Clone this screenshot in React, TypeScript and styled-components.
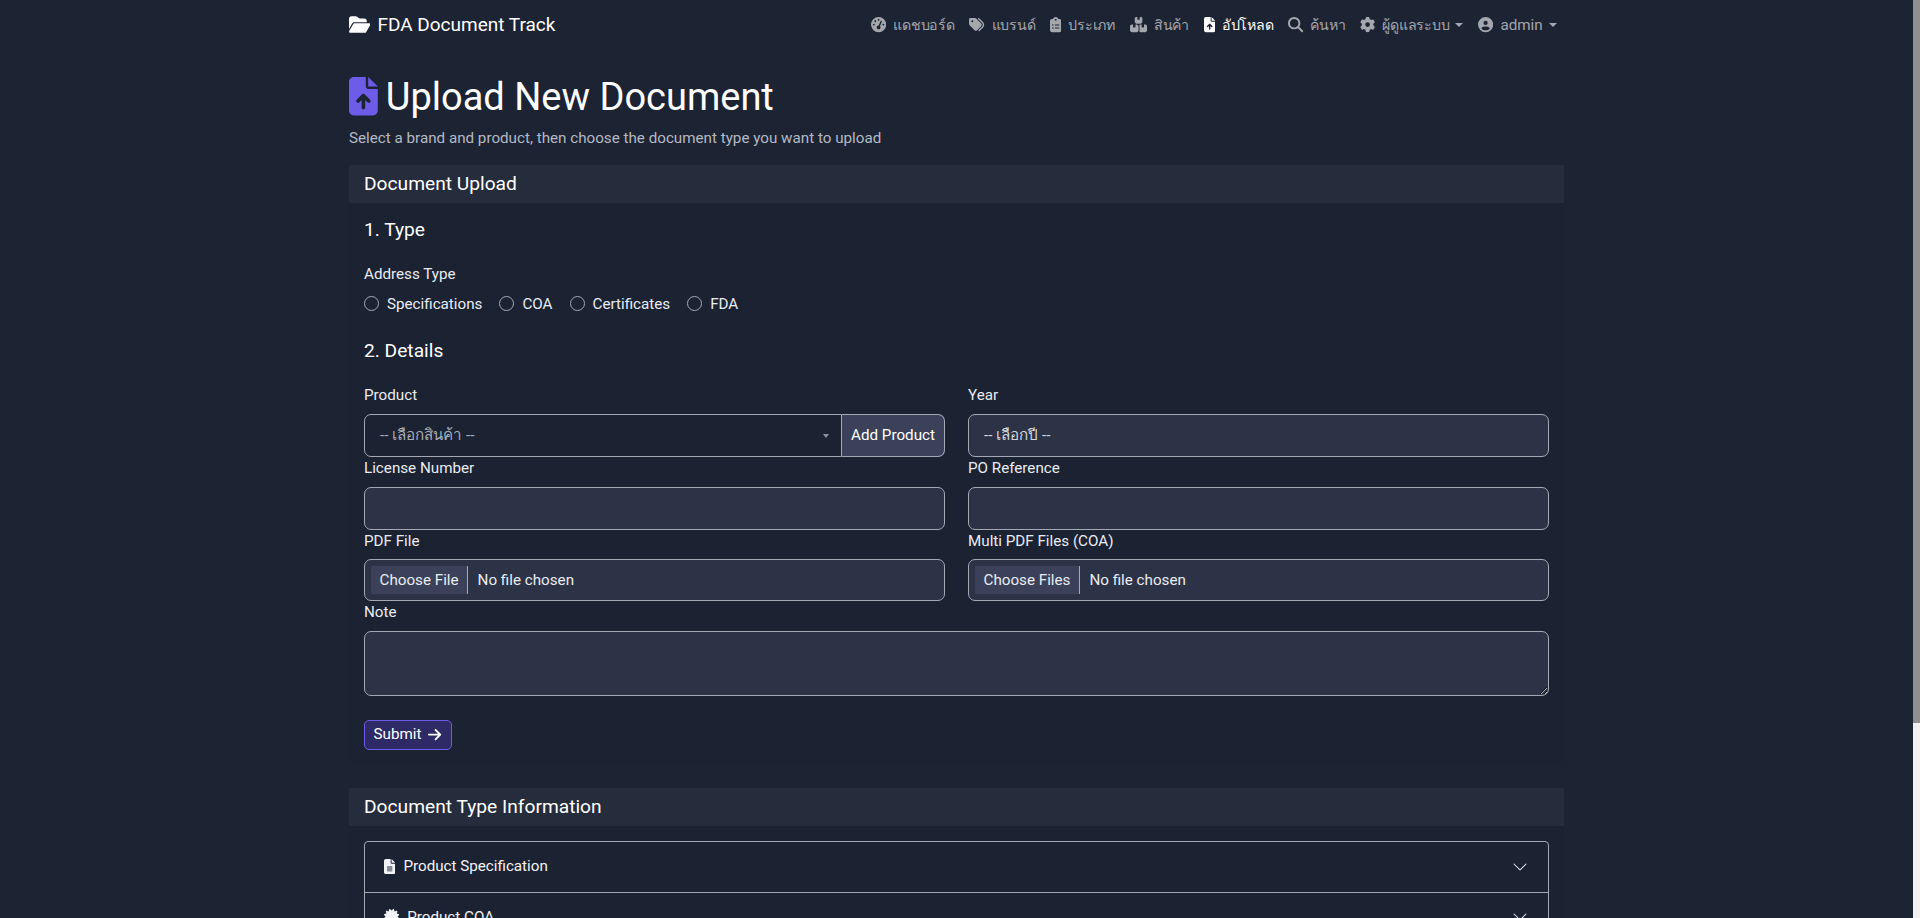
import React from 'react';
import styled, { createGlobalStyle } from 'styled-components';
import {
  FaFolderOpen,
  FaFileArrowUp,
  FaGaugeHigh,
  FaTags,
  FaClipboardList,
  FaBoxesStacked,
  FaMagnifyingGlass,
  FaGear,
  FaCircleUser,
  FaArrowRight,
  FaFileLines,
  FaCertificate,
  FaAward,
  FaShieldHalved
} from 'react-icons/fa6';

const FONT = `Roboto, 'Noto Sans', 'Noto Sans CJK SC', sans-serif`;

const GlobalStyle = createGlobalStyle`
  * { box-sizing: border-box; }
  body {
    margin: 0;
    padding-right: 7px;
    background: #1c2333;
    color: #e9ecf2;
    font-family: ${FONT};
    font-size: 15.2px;
    line-height: 22.8px;
  }
`;

const ScrollTrack = styled.div`
  position: fixed;
  top: 0;
  right: 0;
  bottom: 0;
  width: 7px;
  background: #f1f1f1;
`;

const ScrollThumb = styled.div`
  height: 723px;
  background: #8f8f8f;
`;

const Container = styled.div`
  width: 100%;
  max-width: 1239px;
  margin: 0 auto;
  padding: 0 12px;
`;

const Navbar = styled.nav`
  height: 50px;
  display: flex;
  align-items: center;
  justify-content: space-between;
`;

const Brand = styled.a`
  display: flex;
  align-items: center;
  gap: 7px;
  font-size: 19px;
  color: #fff;
  svg { width: 21.4px; height: 19px; }
`;

const NavList = styled.ul`
  display: flex;
  align-items: center;
  list-style: none;
  margin: 0;
  padding: 0;
`;

const NavItem = styled.li<{ $active?: boolean }>`
  display: flex;
  align-items: center;
  gap: 7px;
  padding: 0 7.4px;
  color: ${p => (p.$active ? '#fff' : 'rgba(255, 255, 255, 0.6)')};
`;

// FontAwesome glyphs differ in width, the icon box follows the glyph ratio
const GlyphBox = styled.span<{ $ratio: number }>`
  display: flex;
  width: ${p => p.$ratio * 15.2}px;
  height: 15.2px;
  svg { width: 100%; height: 100%; }
`;

const NavText = styled.span<{ $thai?: boolean }>`
  font-size: ${p => (p.$thai ? '14.2px' : '15.2px')};
  letter-spacing: ${p => (p.$thai ? '-0.25px' : '0')};
`;

const Caret = styled.span`
  display: inline-block;
  margin-left: -1px;
  border-top: 4.5px solid currentColor;
  border-left: 4.5px solid transparent;
  border-right: 4.5px solid transparent;
`;

const Title = styled.h1`
  display: flex;
  align-items: center;
  gap: 8px;
  margin: 23px 0 8px;
  padding-top: 1px;
  height: 46px;
  font-size: 38px;
  font-weight: 400;
  line-height: 46px;
  color: #fff;
  svg { width: 28.8px; height: 38.4px; color: #6c5ce7; }
`;

const Lead = styled.p`
  margin: 0 0 15px;
  color: #b4b9c4;
`;

const Card = styled.section`
  margin-bottom: 22.8px;
  border-radius: 6px;
  background: #1b2232;
`;

const CardHeader = styled.h5`
  margin: 0;
  height: 38px;
  padding: 1px 15px 0;
  display: flex;
  align-items: center;
  background: #252c3c;
  font-size: 19.2px;
  font-weight: 400;
  color: #fff;
`;

const CardBody = styled.div`
  padding: 15px;
`;

const SectionTitle = styled.h5`
  margin: 0 0 22px;
  font-size: 19.2px;
  font-weight: 400;
  line-height: 23px;
  color: #fff;
`;

const Label = styled.label`
  display: block;
  margin-bottom: 7px;
`;

const RadioRow = styled.div`
  display: flex;
  gap: 17px;
  margin-bottom: 24px;
`;

const RadioLabel = styled.label`
  display: flex;
  align-items: center;
  gap: 8px;
`;

const RadioDot = styled.span`
  width: 15px;
  height: 15px;
  border-radius: 50%;
  border: 1px solid #a5a9b3;
`;

const Grid = styled.div`
  display: grid;
  grid-template-columns: 1fr 1fr;
  column-gap: 23px;
`;

const Field = styled.div<{ $wide?: boolean }>`
  grid-column: ${p => (p.$wide ? '1 / -1' : 'auto')};
`;

const Control = styled.div`
  display: flex;
  align-items: center;
  height: 42.8px;
  padding: 0 15px;
  border: 1px solid #a5a9b3;
  border-radius: 7px;
  background: #2d3346;
  color: #d3d6dd;
`;

const InputGroup = styled.div`
  display: flex;
  height: 42.8px;
`;

const SelectBox = styled.div`
  flex: 1;
  display: flex;
  align-items: center;
  justify-content: space-between;
  padding: 0 12px 0 15px;
  border: 1px solid #a5a9b3;
  border-radius: 7px 0 0 7px;
  color: #a9adb8;
`;

const AddButton = styled.div`
  display: flex;
  align-items: center;
  width: 103px;
  justify-content: center;
  background: #3a4159;
  border: 1px solid #a5a9b3;
  border-left: 0;
  border-radius: 0 7px 7px 0;
  color: #fff;
`;

const SmallCaret = styled.span`
  border-top: 4px solid #8c909b;
  border-left: 3px solid transparent;
  border-right: 3px solid transparent;
`;

const FileControl = styled.div`
  display: flex;
  align-items: center;
  height: 41.6px;
  margin-top: 0.7px;
  padding: 0 6px;
  border: 1px solid #a5a9b3;
  border-radius: 7px;
  background: #2d3346;
`;

const FileButton = styled.span`
  display: flex;
  align-items: center;
  height: 28px;
  padding: 0 8.5px;
  margin-right: 9.5px;
  background: #3a4159;
  border-right: 1px solid #a5a9b3;
  color: #e9ecf2;
`;

const NoteArea = styled.textarea`
  display: block;
  width: 100%;
  height: 65px;
  border: 1px solid #a5a9b3;
  border-radius: 7px;
  background: #2d3346;
  outline: none;
`;

const SubmitButton = styled.button`
  display: inline-flex;
  align-items: center;
  gap: 6px;
  height: 30px;
  margin-top: 24px;
  padding: 0 8.5px;
  border: 1px solid #6c5ce7;
  border-radius: 5px;
  background: #2d2a66;
  color: #fff;
  font: inherit;
`;

const Accordion = styled.div`
  border: 1px solid #a5a9b3;
  border-radius: 4px;
`;

const AccordionRow = styled.div`
  display: flex;
  align-items: center;
  justify-content: space-between;
  height: 50px;
  padding: 0 20px 0 19px;
  & + & { border-top: 1px solid #a5a9b3; }
`;

const RowLabel = styled.span`
  display: flex;
  align-items: center;
  gap: 8px;
  color: #f2f3f6;
`;

const Chevron = () => (
  <svg width="16" height="16" viewBox="0 0 16 16" fill="#e9ecf2">
    <path d="M1.646 4.646a.5.5 0 0 1 .708 0L8 10.293l5.646-5.647a.5.5 0 0 1 .708.708l-6 6a.5.5 0 0 1-.708 0l-6-6a.5.5 0 0 1 0-.708z" />
  </svg>
);

const navLinks = [
  { label: 'แดชบอร์ด', icon: <FaGaugeHigh />, ratio: 1, thai: true },
  { label: 'แบรนด์', icon: <FaTags />, ratio: 1, thai: true },
  { label: 'ประเภท', icon: <FaClipboardList />, ratio: 0.75, thai: true },
  { label: 'สินค้า', icon: <FaBoxesStacked />, ratio: 1.125, thai: true },
  { label: 'อัปโหลด', icon: <FaFileArrowUp />, ratio: 0.75, thai: true, active: true },
  { label: 'ค้นหา', icon: <FaMagnifyingGlass />, ratio: 1, thai: true },
  { label: 'ผู้ดูแลระบบ', icon: <FaGear />, ratio: 1, thai: true, caret: true },
  { label: 'admin', icon: <FaCircleUser />, ratio: 1, caret: true }
];

const docTypes = [
  { label: 'Product Specification', icon: <FaFileLines />, ratio: 0.75 },
  { label: 'Product COA', icon: <FaCertificate />, ratio: 1 },
  { label: 'Certificates', icon: <FaAward />, ratio: 0.75 },
  { label: 'FDA', icon: <FaShieldHalved />, ratio: 1 }
];

export default function App() {
  return (
    <>
      <GlobalStyle />
      <ScrollTrack>
        <ScrollThumb />
      </ScrollTrack>
      <Container>
        <Navbar>
          <Brand>
            <FaFolderOpen />
            FDA Document Track
          </Brand>
          <NavList>
            {navLinks.map(link => (
              <NavItem key={link.label} $active={link.active}>
                <GlyphBox $ratio={link.ratio}>{link.icon}</GlyphBox>
                <NavText $thai={link.thai}>{link.label}</NavText>
                {link.caret && <Caret />}
              </NavItem>
            ))}
          </NavList>
        </Navbar>

        <Title>
          <FaFileArrowUp />
          Upload New Document
        </Title>
        <Lead>Select a brand and product, then choose the document type you want to upload</Lead>

        <Card>
          <CardHeader>Document Upload</CardHeader>
          <CardBody>
            <SectionTitle>1. Type</SectionTitle>
            <Label>Address Type</Label>
            <RadioRow>
              {['Specifications', 'COA', 'Certificates', 'FDA'].map(t => (
                <RadioLabel key={t}>
                  <RadioDot />
                  {t}
                </RadioLabel>
              ))}
            </RadioRow>
            <SectionTitle>2. Details</SectionTitle>
            <Grid>
              <Field>
                <Label>Product</Label>
                <InputGroup>
                  <SelectBox>
                    -- เลือกสินค้า --
                    <SmallCaret />
                  </SelectBox>
                  <AddButton>Add Product</AddButton>
                </InputGroup>
              </Field>
              <Field>
                <Label>Year</Label>
                <Control>-- เลือกปี --</Control>
              </Field>
              <Field>
                <Label>License Number</Label>
                <Control />
              </Field>
              <Field>
                <Label>PO Reference</Label>
                <Control />
              </Field>
              <Field>
                <Label>PDF File</Label>
                <FileControl>
                  <FileButton>Choose File</FileButton>
                  No file chosen
                </FileControl>
              </Field>
              <Field>
                <Label>Multi PDF Files (COA)</Label>
                <FileControl>
                  <FileButton>Choose Files</FileButton>
                  No file chosen
                </FileControl>
              </Field>
              <Field $wide>
                <Label>Note</Label>
                <NoteArea />
              </Field>
            </Grid>
            <SubmitButton>
              Submit
              <FaArrowRight />
            </SubmitButton>
          </CardBody>
        </Card>

        <Card>
          <CardHeader>Document Type Information</CardHeader>
          <CardBody>
            <Accordion>
              {docTypes.map(d => (
                <AccordionRow key={d.label}>
                  <RowLabel>
                    <GlyphBox $ratio={d.ratio}>{d.icon}</GlyphBox>
                    {d.label}
                  </RowLabel>
                  <Chevron />
                </AccordionRow>
              ))}
            </Accordion>
          </CardBody>
        </Card>
      </Container>
    </>
  );
}
